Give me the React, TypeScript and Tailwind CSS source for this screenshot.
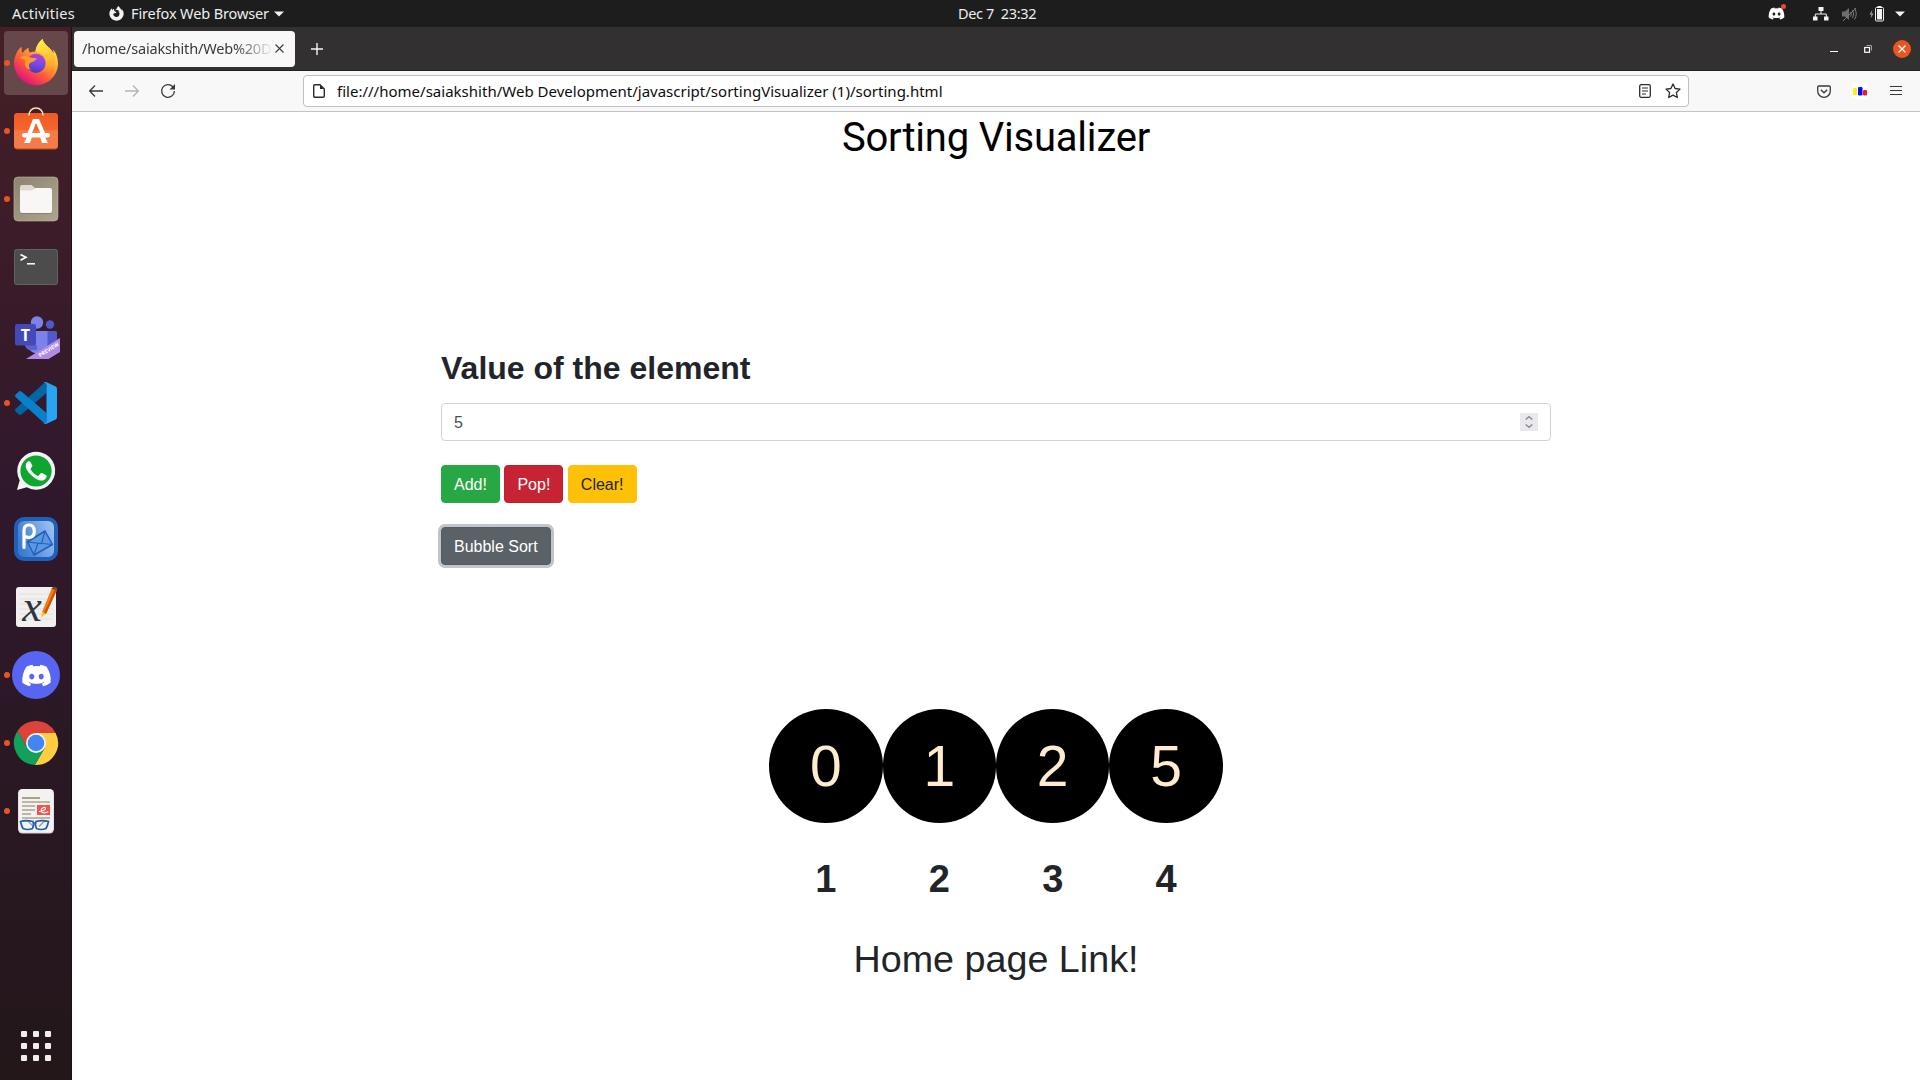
import type { ReactNode } from 'react';
import { FaDiscord, FaFirefoxBrowser, FaWhatsapp } from 'react-icons/fa';

const UI = "font-['Noto_Sans',sans-serif]";

function Glyph({ children }: { children: ReactNode }) {
  return (
    <svg width="48" height="48" viewBox="0 0 48 48" className="shrink-0 overflow-visible">
      {children}
    </svg>
  );
}

const FirefoxIcon = (
  <Glyph>
    <defs>
      <linearGradient id="ffBody" x1="0.85" y1="0.1" x2="0.25" y2="0.95">
        <stop offset="0" stopColor="#fff44f" />
        <stop offset="0.35" stopColor="#ffa930" />
        <stop offset="0.65" stopColor="#ff5a3a" />
        <stop offset="1" stopColor="#e3107d" />
      </linearGradient>
      <linearGradient id="ffTail" x1="0.4" y1="0" x2="0.6" y2="1">
        <stop offset="0" stopColor="#fff04a" />
        <stop offset="0.6" stopColor="#ffbf2f" />
        <stop offset="1" stopColor="#ff8a2b" stopOpacity="0" />
      </linearGradient>
      <linearGradient id="ffGlobe" x1="0.6" y1="0" x2="0.4" y2="1">
        <stop offset="0" stopColor="#b93ae0" />
        <stop offset="0.5" stopColor="#7a4be8" />
        <stop offset="1" stopColor="#4b3bb5" />
      </linearGradient>
    </defs>
    <path d="M30.5 0c-3 2.500-6.500 7-7 12.500-2 0-4 .4-5.800 1.100-1-1.300-1.300-3.300-.9-4.900-2.600 1.200-4.800 3.300-6.300 5.300-1-1.500-1-4.500-.8-6.300C6 10 2 17 2 24c0 12 9.800 22.200 22 22.200S46 36.500 46 24.500c0-6-2.400-11.500-5.300-14.200.6 1.500 1 3 1 4.400C38.500 8 32 6.500 30.500 0z" fill="url(#ffBody)" />
    <path d="M30.500 0c-3 2.500-6.500 7-7 12.500 6 0 10 5 10.500 11 .3 5-3 10-8 11 9 1 16-5 17-13 .4-3-.4-6-1.300-6.800C38.500 8 32 6.500 30.500 0z" fill="url(#ffTail)" />
    <circle cx="24" cy="24.300" r="9.600" fill="url(#ffGlobe)" />
    <path d="M7.500 19c2-2 6-2.600 9.300-1.800 1.200 1.600 3.600 1.800 7.700 2 .2 2.300-3 3.200-5.700 4.300-2.800 1.200-2.300 5.500.2 7.300-5.500-.8-7-5.800-5.500-9.600-2-.9-4-1.300-6-2.200z" fill="#ff9a26" />
  </Glyph>
);

const StoreIcon = (
  <Glyph>
    <defs>
      <linearGradient id="store" x1="0" y1="0" x2="0" y2="1">
        <stop offset="0" stopColor="#f05a22" />
        <stop offset="0.48" stopColor="#f3672f" />
        <stop offset="0.5" stopColor="#f57a45" />
        <stop offset="1" stopColor="#f47c48" />
      </linearGradient>
    </defs>
    <rect x="2" y="6" width="44" height="36.500" rx="3.500" fill="#c9491b" />
    <rect x="2" y="6" width="44" height="35.500" rx="3.500" fill="url(#store)" />
    <path d="M17 8.500C17 4 20 1 24 1s7 3 7 7.500" fill="none" stroke="#fbe3bd" strokeWidth="1.600" />
    <path d="M12 36l3-6h5l-2 6zM36 36l-3-6h-5l2 6zM15.500 26L21 12h6l6 14h-4.600L24 16l-4 10z" fill="#fff" />
    <rect x="10" y="26" width="28" height="4.600" rx="2.300" fill="#fff" />
  </Glyph>
);

const FilesIcon = (
  <Glyph>
    <defs>
      <linearGradient id="files" x1="0" y1="0" x2="1" y2="1">
        <stop offset="0" stopColor="#8c846f" />
        <stop offset="1" stopColor="#ada590" />
      </linearGradient>
    </defs>
    <rect x="2" y="2" width="44" height="44" rx="4" fill="url(#files)" stroke="#c2bba9" strokeWidth="0.600" />
    <path d="M8 12a2 2 0 0 1 2-2h9.500l3.500 3v5H8z" fill="#dedacd" />
    <path d="M8 16.500h12l3.500-3.500H38a2 2 0 0 1 2 2v22a2 2 0 0 1-2 2H10a2 2 0 0 1-2-2z" fill="#6f6857" opacity="0.500" />
    <path d="M8 15.500h12l3.500-2.500H38a2 2 0 0 1 2 2v21a2 2 0 0 1-2 2H10a2 2 0 0 1-2-2z" fill="#f8f7f5" />
  </Glyph>
);

const TerminalIcon = (
  <Glyph>
    <rect x="2" y="6" width="44" height="36" rx="3" fill="#4c4c4c" />
    <rect x="2.500" y="6.500" width="43" height="35" rx="2.800" fill="none" stroke="#626262" />
    <path d="M8.500 11.500l5.500 2.800-5.500 2.900" fill="none" stroke="#fff" strokeWidth="1.600" />
    <path d="M15 20.800h8" stroke="#fff" strokeWidth="1.500" />
  </Glyph>
);

const TeamsIcon = (
  <Glyph>
    <circle cx="38" cy="13.500" r="4.200" fill="#5059c9" />
    <circle cx="25" cy="11.500" r="6.200" fill="#7b83eb" />
    <path d="M33 20h10.500a1.500 1.500 0 0 1 1.500 1.500V32l-9 7z" fill="#5059c9" />
    <path d="M17 20h18.500v22h-13C19 41 16 38 16 34z" fill="#7b83eb" />
    <path d="M13 34h12v5h-8q-4-2-4-5z" fill="#5c63cc" />
    <rect x="3" y="13" width="21" height="21.500" rx="2" fill="#4349b8" />
    <text x="13.500" y="29.500" textAnchor="middle" fontFamily="Open Sans, sans-serif" fontWeight="700" fontSize="16" fill="#fff">T</text>
    <path d="M14 48L48 27v14L36.500 48z" fill="#b08be6" />
    <text transform="translate(28 46.300) rotate(-32)" fontFamily="Open Sans, sans-serif" fontWeight="700" fontSize="5.200" fill="#fff">PREVIEW</text>
  </Glyph>
);

const CodeIcon = (
  <Glyph>
    <path d="M3.500 32.500L7 35.500q1.200.8 2.400 0L34.500 14V4.500Q33 3 31.500 4.500L3.500 30q-1 1.200 0 2.500z" fill="#0465a4" />
    <path d="M3.500 15.500L7 12.500q1.200-.8 2.400 0L34.500 34v9.500q-1.500 1.500-3 0L3.500 18q-1-1.200 0-2.500z" fill="#0a7fcb" />
    <path d="M34 3l9.800 4.600Q45 8.300 45 9.700v28.600q0 1.400-1.200 2.100L34 45q-1.500.4-2.600-1 3.100 1 3.100-2V6q0-3-3.100-2 1.100-1.400 2.600-1z" fill="#27a5f2" />
  </Glyph>
);

const WhatsappIcon = (
  <Glyph>
    <path d="M5 43l2.700-9.800A19 19 0 1 1 14.800 40.300z" fill="#f5f5f5" />
    <circle cx="24" cy="24" r="15.600" fill="#0fa62f" />
    <path d="M18.600 15.300c-.5-1-1.200-1-1.900-1-1.600.3-3 2.300-3 4.600 0 2.900 2 5.700 5 8.700 4 4 7.700 6 10.700 6 2.600 0 5-1.900 5.200-4.100.1-.8-.1-1.100-.9-1.600l-3.700-1.800c-.7-.3-1.100-.3-1.600.4l-1.600 2c-.5.500-.9.500-1.500.2-3.200-1.500-5.300-3.800-6.600-6.200-.3-.6-.2-.9.200-1.300l1.200-1.500c.3-.5.300-.8.100-1.400z" fill="#fff" />
  </Glyph>
);

const MailIcon = (
  <Glyph>
    <defs>
      <linearGradient id="mail" x1="0" y1="0.600" x2="1" y2="0.200">
        <stop offset="0" stopColor="#3a7bd2" />
        <stop offset="1" stopColor="#9cc1f2" />
      </linearGradient>
    </defs>
    <rect x="2" y="2" width="44" height="44" rx="10" fill="#2260b8" />
    <rect x="6" y="6" width="36" height="36" rx="6" fill="url(#mail)" />
    <path d="M15.500 27L33 16l7.500 13.500L22 40z" fill="#5d97e4" stroke="#2260b8" strokeWidth="1.500" strokeLinejoin="round" />
    <path d="M15.500 27l14 1.500L33 16M22 40l4-12M40.500 29.500L30.500 28.500" fill="none" stroke="#2260b8" strokeWidth="1.200" />
    <path d="M12 32.500V15.500q0-5.500 5-5.500 5.300 0 5.300 6.300 0 6.200-5.300 6.200-1.500 0-2.500-.5" fill="none" stroke="#fff" strokeWidth="3.200" strokeLinecap="round" />
  </Glyph>
);

const XournalIcon = (
  <Glyph>
    <rect x="4" y="4" width="40" height="40" rx="3" fill="#f1f0ee" />
    <path d="M7 11h34M7 16h34M7 21h34M7 26h34M7 31h34M7 36h34" stroke="#dcdbd8" strokeWidth="0.700" />
    <text x="20" y="38" textAnchor="middle" fontFamily="Liberation Serif, serif" fontStyle="italic" fontSize="44" fill="#2e3440">x</text>
    <path d="M30 29l9.500-23q2-2 5.500.7L34 31z" fill="#f57c14" />
    <path d="M32 30L43 6l2 .8L34 31z" fill="#c95405" />
    <path d="M30 29l4 2-5 3.600z" fill="#f4c534" />
    <path d="M39.500 6l1.300-2q3-.6 4.700 1.200L45 7z" fill="#70452d" />
  </Glyph>
);

const DiscordIcon = (
  <div className="flex size-12 items-center justify-center rounded-full bg-[#5865f2] text-white">
    <FaDiscord size={31} />
  </div>
);

const ChromeIcon = (
  <Glyph>
    <path d="M5.540 12.030A22 22 0 0 1 43.600 14H24L15.340 29z" fill="#dd4439" />
    <path d="M43.600 14A22 22 0 0 1 22.860 46l9.800-17L24 14z" fill="#fecd40" />
    <path d="M22.860 46A22 22 0 0 1 5.540 12.030L15.340 29h17.320z" fill="#12a05c" />
    <circle cx="24" cy="24" r="10" fill="#f1f3f6" />
    <circle cx="24" cy="24" r="8.300" fill="#4285f4" />
  </Glyph>
);

const DocumentIcon = (
  <Glyph>
    <rect x="6" y="2" width="36" height="44.500" rx="4.500" fill="#d6d4d1" />
    <rect x="6.500" y="2" width="35" height="43.500" rx="4.500" fill="#f3f2f1" />
    <path d="M10 11h18" stroke="#a8a089" strokeWidth="2" />
    <path d="M10 15h28M10 19h13M10 23h13M10 27h9M10 31h28" stroke="#bdb7a6" strokeWidth="1.800" />
    <rect x="25" y="18" width="13" height="10" fill="#f2544b" />
    <path d="M27 24.500c3 0 7-1.500 6.500-3.500-1-1.600-4.500 0-4.300 2.800.5 2.500 4 2.600 7 .7" fill="none" stroke="#fff" strokeWidth="1.200" />
    <path d="M10 34l6 .2 5 5M37 34l-5 .5-5 5" fill="none" stroke="#8f9296" strokeWidth="1.200" />
    <path d="M8.500 34.500Q14 32.800 21 34.500q1.300 3-.5 7-4.500 2-9.500 0-1.700-3-2.500-7zM36.500 34.500q-6-1.700-12.500 0-1.300 3 .5 7 4.500 2 9.500 0 1.700-3 2.500-7zM21 36h3" fill="none" stroke="#1f5fb0" strokeWidth="1.700" />
  </Glyph>
);

const dock: { name: string; icon: ReactNode; running?: boolean; active?: boolean }[] = [
  { name: 'Firefox', icon: FirefoxIcon, running: true, active: true },
  { name: 'Software', icon: StoreIcon, running: true },
  { name: 'Files', icon: FilesIcon, running: true },
  { name: 'Terminal', icon: TerminalIcon },
  { name: 'Teams', icon: TeamsIcon },
  { name: 'Code', icon: CodeIcon, running: true },
  { name: 'WhatsApp', icon: WhatsappIcon },
  { name: 'Mail', icon: MailIcon },
  { name: 'Xournal', icon: XournalIcon },
  { name: 'Discord', icon: DiscordIcon, running: true },
  { name: 'Chrome', icon: ChromeIcon, running: true },
  { name: 'Documents', icon: DocumentIcon, running: true },
];

function TopBar() {
  return (
    <header className={`${UI} grid h-[27px] shrink-0 grid-cols-[1fr_auto_1fr] items-center bg-[#1d1d1d] text-[14.5px] leading-[27px] text-[#eeeeee]`}>
      <div className="flex items-center">
        <span className="ml-3 w-[97px] whitespace-nowrap tracking-[0.25px]">Activities</span>
        <FaFirefoxBrowser size={15} className="text-[#f2f2f2]" />
        <span className="ml-[7px] whitespace-nowrap tracking-[-0.12px]">Firefox Web Browser</span>
        <svg width="10" height="6" viewBox="0 0 10 6" className="ml-[5px]"><path d="M0 0.500h10L5 5.500z" fill="#f2f2f2" /></svg>
      </div>
      <span className="mr-[-37px] ml-[37px] whitespace-pre tracking-[-0.35px]">Dec 7  23:32</span>
      <div className="flex items-center justify-end pr-[15px]">
        <span className="relative mr-[28px] flex">
          <FaDiscord size={17} className="text-white" />
          <span className="absolute -top-[1px] -right-[1px] size-[5px] rounded-full bg-[#ee4444]" />
        </span>
        <svg width="16" height="14" viewBox="0 0 16 14" className="mr-[13px]">
          <path d="M5.500 0h5v4h-5zM0 9.500h4.500v4H0zM11 9.500h4.500v4H11z" fill="#f2f2f2" />
          <path d="M8 4v3M2.300 10V7h11v3" fill="none" stroke="#f2f2f2" />
        </svg>
        <svg width="16" height="14" viewBox="0 0 16 14" className="mr-[11px]">
          <path d="M0 4.500h3L7 1v12L3 9.500H0z" fill="#6e6e6e" />
          <path d="M8.500 5q1.500 2 0 4.500M10.500 3q2.500 4 0 8M12.500 1.500q3.500 5 0 11M1 14L14 1" fill="none" stroke="#7c7c7c" />
        </svg>
        <svg width="15" height="16" viewBox="0 0 15 16" className="mr-[11px]">
          <path d="M3.500 3.500L0.500 8.500H2.500L1.500 12.500L4.500 7.500H2.500z" fill="#a5a5a5" />
          <path d="M8.500 0h4v1.500h-4z" fill="#f2f2f2" />
          <rect x="6.500" y="1.500" width="8" height="13.500" rx="1" fill="none" stroke="#f2f2f2" />
          <rect x="8" y="3" width="5" height="10.500" fill="#f2f2f2" />
        </svg>
        <svg width="10" height="6" viewBox="0 0 10 6"><path d="M0 0.500h10L5 5.500z" fill="#f2f2f2" /></svg>
      </div>
    </header>
  );
}

function Dock() {
  return (
    <nav className="flex w-[72px] shrink-0 flex-col border-r border-[#1c0f18] bg-linear-to-b from-[#451f25] via-[#30182c] via-45% to-[#23171a] pt-[2px]">
      {dock.map((d) => (
        <div key={d.name} className="flex h-[68px] items-center">
          <div className={`relative ml-1 flex size-16 items-center justify-center rounded-[4px] ${d.active ? 'bg-[#66474a]' : ''}`}>
            {d.icon}
            {d.running && <span className="absolute top-[29px] left-0 size-[6px] rounded-full bg-[#e95420]" />}
          </div>
        </div>
      ))}
      <div className="mt-auto mb-[19px] grid grid-cols-[6px_6px_6px] justify-center gap-[6px]">
        {Array.from({ length: 9 }, (_, i) => (
          <span key={i} className="size-[6px] rounded-[1px] bg-[#f0efee]" />
        ))}
      </div>
    </nav>
  );
}

function TabStrip() {
  return (
    <div className="flex h-[44px] shrink-0 items-center border-b border-[#221f20] bg-[#333031] pl-[2px]">
      <div className={`${UI} flex h-9 w-[221px] items-center rounded-[4px] bg-[#f8f8f8] pl-2 text-[14.5px] text-[#38383d]`}>
        <span className="w-[191px] whitespace-nowrap tracking-[-0.18px] [mask-image:linear-gradient(to_right,black_80%,transparent)]">/home/saiakshith/Web%20D</span>
        <svg width="9" height="9" viewBox="0 0 9 9" className="ml-[2px]"><path d="M0.500 0.500l8 8M8.500 0.500l-8 8" stroke="#3b3b40" strokeWidth="1.100" /></svg>
      </div>
      <svg width="12" height="12" viewBox="0 0 12 12" className="mt-px ml-4"><path d="M6 0v12M0 6h12" stroke="#f5f5f5" strokeWidth="1.400" /></svg>
      <svg width="8" height="2" viewBox="0 0 8 2" className="mt-[5px] ml-auto"><path d="M0 1.500h8" stroke="#fff" /></svg>
      <svg width="8" height="8" viewBox="0 0 8 8" className="mt-px ml-[26px]">
        <path d="M2.500 0.500h5v5" fill="none" stroke="#a5a3a3" />
        <rect x="0.700" y="2.500" width="4.800" height="4.800" fill="none" stroke="#fff" strokeWidth="1.200" />
      </svg>
      <span className="mr-[9px] ml-[21px] flex size-[18px] items-center justify-center rounded-full bg-[#e95420]">
        <svg width="8" height="8" viewBox="0 0 8 8"><path d="M0.500 0.500l7 7M7.500 0.500l-7 7" stroke="#fff" strokeWidth="1.400" /></svg>
      </span>
    </div>
  );
}

function NavBar() {
  return (
    <div className="flex h-[41px] shrink-0 items-center border-b border-[#c3c3c5] bg-[#f8f8f8]">
      <svg width="14" height="12" viewBox="0 0 14 12" className="ml-[17px]"><path d="M6 0.500L0.700 6l5.300 5.500M1 6h13" fill="none" stroke="#38383d" strokeWidth="1.300" /></svg>
      <svg width="14" height="12" viewBox="0 0 14 12" className="ml-[22px]"><path d="M8 0.500L13.300 6 8 11.500M13 6H0" fill="none" stroke="#b4b4b6" strokeWidth="1.300" /></svg>
      <svg width="16" height="16" viewBox="0 0 16 16" className="ml-[21px]">
        <path d="M12.800 3.700A6.400 6.400 0 1 0 14.400 8" fill="none" stroke="#38383d" strokeWidth="1.300" />
        <path d="M15 1v5.500H9.500z" fill="#38383d" />
      </svg>
      <div className="ml-[127px] flex h-8 w-[1386px] items-center rounded-[4px] border border-[#bfbfc1] bg-white">
        <svg width="12" height="14" viewBox="0 0 12 14" className="ml-[9px]">
          <path d="M2 0.700h5L11.300 5v7q0 1.300-1.300 1.300H2Q0.700 13.300 0.700 12V2Q0.700 0.700 2 0.700z" fill="none" stroke="#2b2b2f" strokeWidth="1.400" />
          <path d="M7 0.700V5h4.300z" fill="#2b2b2f" />
        </svg>
        <span className={`${UI} ml-3 whitespace-nowrap text-[15px] tracking-[0.01px] text-[#0c0c0d]`}>file:///home/saiakshith/Web Development/javascript/sortingVisualizer (1)/sorting.html</span>
        <svg width="12" height="14" viewBox="0 0 12 14" className="ml-auto">
          <rect x="0.700" y="0.700" width="10.600" height="12.600" rx="1.500" fill="none" stroke="#2b2b2f" strokeWidth="1.300" />
          <path d="M3 4h6M3 7h6M3 10h4" stroke="#2b2b2f" strokeWidth="1.200" />
        </svg>
        <svg width="16" height="16" viewBox="0 0 16 16" className="mr-[7px] ml-[14px]">
          <path d="M8 1l2.100 4.500 4.900.6-3.600 3.400.9 5L8 12.100l-4.300 2.400.9-5L1 6.100l4.900-.6z" fill="none" stroke="#2b2b2f" strokeWidth="1.300" strokeLinejoin="round" />
        </svg>
      </div>
      <svg width="14" height="14" viewBox="0 0 14 14" className="mt-px ml-auto">
        <path d="M2 1h10q1.300 0 1.300 1.300V6a6.300 6.300 0 0 1-12.600 0V2.300Q0.700 1 2 1z" fill="none" stroke="#38383d" strokeWidth="1.300" />
        <path d="M3.800 4.800L7 7.800l3.200-3" fill="none" stroke="#38383d" strokeWidth="1.300" />
      </svg>
      <svg width="16" height="16" viewBox="0 0 16 16" className="ml-[21px]">
        <rect width="16" height="16" fill="#fff" />
        <rect x="1" y="5" width="4" height="7" rx="1.200" fill="#fff200" />
        <rect x="6" y="4" width="4.500" height="8.500" rx="1.200" fill="#0a0af5" />
        <rect x="11" y="7" width="4" height="5.500" rx="1.200" fill="#f31a1a" />
      </svg>
      <svg width="12" height="10" viewBox="0 0 12 10" className="mr-[18px] ml-[22px]"><path d="M0 0.500h12M0 4.500h12M0 8.500h12" stroke="#38383d" strokeWidth="1" /></svg>
    </div>
  );
}

const items = [
  { value: 0, index: 1 },
  { value: 1, index: 2 },
  { value: 2, index: 3 },
  { value: 5, index: 4 },
];

function Page() {
  const btn = 'h-[38px] rounded-[4px] border px-3 pt-px text-base leading-[35px]';
  return (
    <main className="flex grow flex-col items-center bg-white font-['Liberation_Sans',Arial,sans-serif] text-[#212529]">
      <h1 className="mt-[2px] h-[47px] font-[Roboto,sans-serif] text-[40px] leading-[48px] tracking-[-0.2px] whitespace-nowrap text-black">Sorting Visualizer</h1>
      <section className="mt-[188px] w-[1110px]">
        <h2 className="text-[32px] leading-[38px] font-bold">Value of the element</h2>
        <div className="mt-4 flex h-[38px] items-center justify-between rounded-[4px] border border-[#ced4da] pr-3 pl-3 text-base text-[#495057]">
          <span className="pt-[2px]">5</span>
          <span className="flex h-[18px] w-[18px] flex-col items-center justify-center gap-[4px] bg-[#e9e9ed]">
            <svg width="8" height="4" viewBox="0 0 8 4"><path d="M0.700 3.500L4 0.700l3.300 2.800" fill="none" stroke="#8f8f9d" strokeWidth="1.500" /></svg>
            <svg width="8" height="4" viewBox="0 0 8 4"><path d="M0.700 0.500L4 3.300l3.300-2.800" fill="none" stroke="#8f8f9d" strokeWidth="1.500" /></svg>
          </span>
        </div>
        <div className="mt-6 flex gap-[4.5px]">
          <button className={`${btn} border-[#28a745] bg-[#28a745] text-white`}>Add!</button>
          <button className={`${btn} border-[#bd2130] bg-[#c82333] text-white`}>Pop!</button>
          <button className={`${btn} border-[#ffc107] bg-[#ffc107]`}>Clear!</button>
        </div>
        <button className={`${btn} mt-6 border-[#545b62] bg-[#5a6268] text-white shadow-[0_0_0_3px_#c1c5c9]`}>Bubble Sort</button>
      </section>
      <section className="mt-[144px] flex">
        {items.map((it) => (
          <div key={it.index} className="flex w-[113.4px] flex-col items-center">
            <div className="flex h-[114px] w-full items-center justify-center rounded-full bg-black text-[57px] leading-none text-[#ffebcd]">{it.value}</div>
            <div className="mt-[33px] text-[38px] leading-[46px] font-bold">{it.index}</div>
          </div>
        ))}
      </section>
      <p className="mt-[34px] text-[37.7px] leading-[46px]">Home page Link!</p>
    </main>
  );
}

export default function App() {
  return (
    <div className="flex h-[1080px] w-[1920px] flex-col overflow-hidden bg-white">
      <TopBar />
      <div className="flex min-h-0 grow">
        <Dock />
        <div className="flex min-w-0 grow flex-col">
          <TabStrip />
          <NavBar />
          <Page />
        </div>
      </div>
    </div>
  );
}
